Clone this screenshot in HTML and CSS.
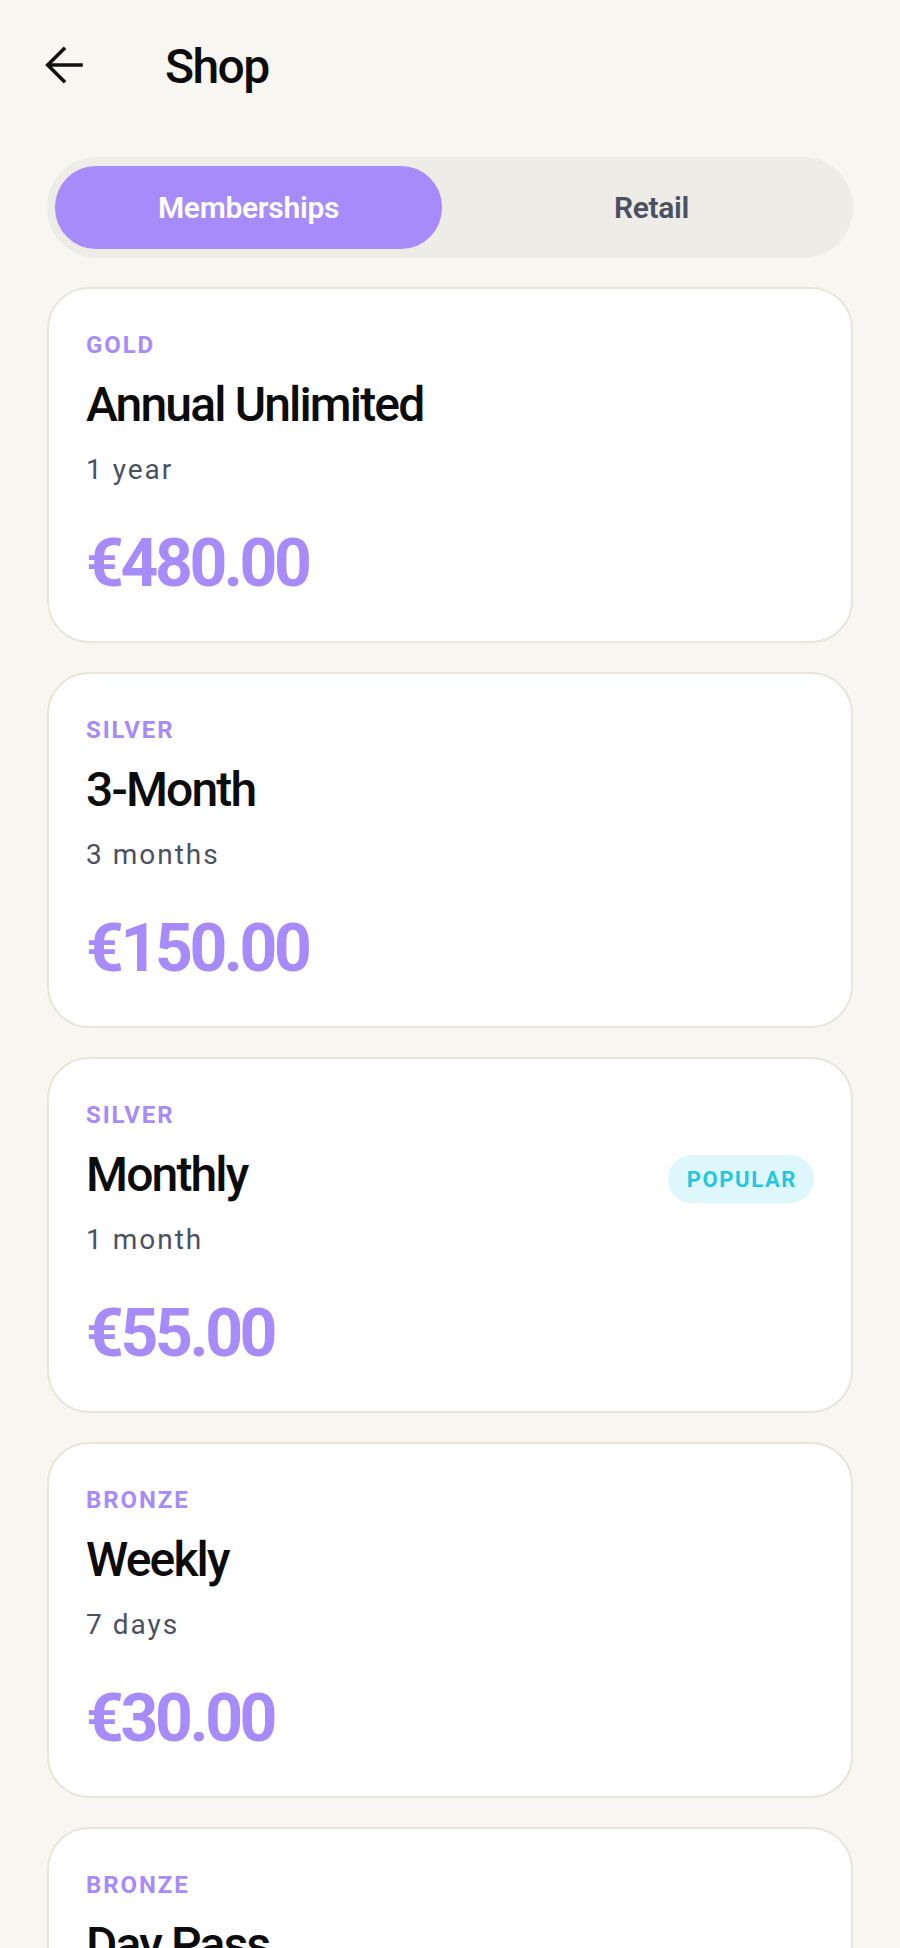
FILE: index.html
```html
<!DOCTYPE html>
<html lang="en">
<head>
<meta charset="utf-8">
<title>Shop</title>
<link rel="stylesheet" href="styles.css">
</head>
<body>
<div class="screen">
  <header class="topbar">
    <button class="back" aria-label="Back">
      <svg width="40" height="40" viewBox="3 3 18 18" fill="none" stroke="#111" stroke-width="1.6" stroke-linecap="butt" stroke-linejoin="miter"><path d="M20 12H4.8"/><path d="M12 4.2 4.2 12 12 19.8"/></svg>
    </button>
    <h1 class="title">Shop</h1>
  </header>

  <nav class="tabs">
    <div class="tab active">Memberships</div>
    <div class="tab">Retail</div>
  </nav>

  <main class="list">
    <section class="card">
      <div class="tier">GOLD</div>
      <div class="row"><h2 class="name">Annual Unlimited</h2></div>
      <div class="dur">1 year</div>
      <div class="price">€480.00</div>
    </section>
    <section class="card">
      <div class="tier">SILVER</div>
      <div class="row"><h2 class="name">3-Month</h2></div>
      <div class="dur">3 months</div>
      <div class="price">€150.00</div>
    </section>
    <section class="card">
      <div class="tier">SILVER</div>
      <div class="row"><h2 class="name">Monthly</h2><span class="badge">POPULAR</span></div>
      <div class="dur">1 month</div>
      <div class="price">€55.00</div>
    </section>
    <section class="card">
      <div class="tier">BRONZE</div>
      <div class="row"><h2 class="name">Weekly</h2></div>
      <div class="dur">7 days</div>
      <div class="price">€30.00</div>
    </section>
    <section class="card">
      <div class="tier">BRONZE</div>
      <div class="row"><h2 class="name">Day Pass</h2></div>
      <div class="dur">1 day</div>
      <div class="price">€12.00</div>
    </section>
  </main>
</div>
</body>
</html>
```

FILE: styles.css
```css
* { box-sizing: border-box; }
html, body { margin: 0; padding: 0; }
body {
  background: #f7f6f1;
  font-family: Roboto, "Liberation Sans", sans-serif;
  color: #0c0c0c;
}
.screen { width: 900px; height: 1948px; overflow: hidden; }

.topbar {
  height: 130px;
  display: flex;
  align-items: center;
  padding-left: 45px;
  gap: 80px;
}
.back {
  width: 40px; height: 40px;
  padding: 0; margin: 0;
  border: 0; background: none;
  display: flex;
}
.title {
  margin: 0;
  padding-top: 3px;
  font-size: 48px;
  line-height: 56px;
  font-weight: 500;
  letter-spacing: -1.6px;
}

.tabs {
  margin: 27px 47px 0;
  height: 101px;
  padding: 9px 8px;
  background: #edece6;
  border-radius: 50px;
  display: flex;
  gap: 16px;
}
.tab {
  flex: 1;
  display: flex;
  align-items: center;
  justify-content: center;
  border-radius: 41px;
  font-size: 30px;
  font-weight: 600;
  letter-spacing: -0.3px;
  color: #4b5063;
}
.tab.active {
  background: #a78bfa;
  color: #ffffff;
}

.list {
  margin: 29px 47px 0;
  display: flex;
  flex-direction: column;
  gap: 29px;
}
.card {
  background: #ffffff;
  border: 2px solid #e9e5d8;
  border-radius: 42px;
  padding: 42px 37px 39px 37px;
}
.tier {
  font-size: 24px;
  line-height: 28px;
  font-weight: 700;
  letter-spacing: 1.9px;
  color: #a78bfa;
}
.row {
  margin-top: 18px;
  display: flex;
  align-items: center;
  justify-content: space-between;
}
.name {
  margin: 0;
  font-size: 48px;
  line-height: 56px;
  font-weight: 500;
  letter-spacing: -1.85px;
  color: #0c0c0c;
}
.badge {
  margin-top: 8px;
  height: 48px;
  padding: 0 17px 0 19px;
  border-radius: 24px;
  background: #ddf7fc;
  color: #26c6e0;
  font-size: 22px;
  font-weight: 700;
  letter-spacing: 1.6px;
  display: flex;
  align-items: center;
}
.dur {
  margin-top: 20px;
  font-size: 28px;
  line-height: 34px;
  letter-spacing: 2px;
  color: #4b5063;
}
.price {
  margin-top: 39px;
  font-size: 66px;
  line-height: 76px;
  font-weight: 700;
  letter-spacing: -3.4px;
  color: #a78bfa;
}
```
